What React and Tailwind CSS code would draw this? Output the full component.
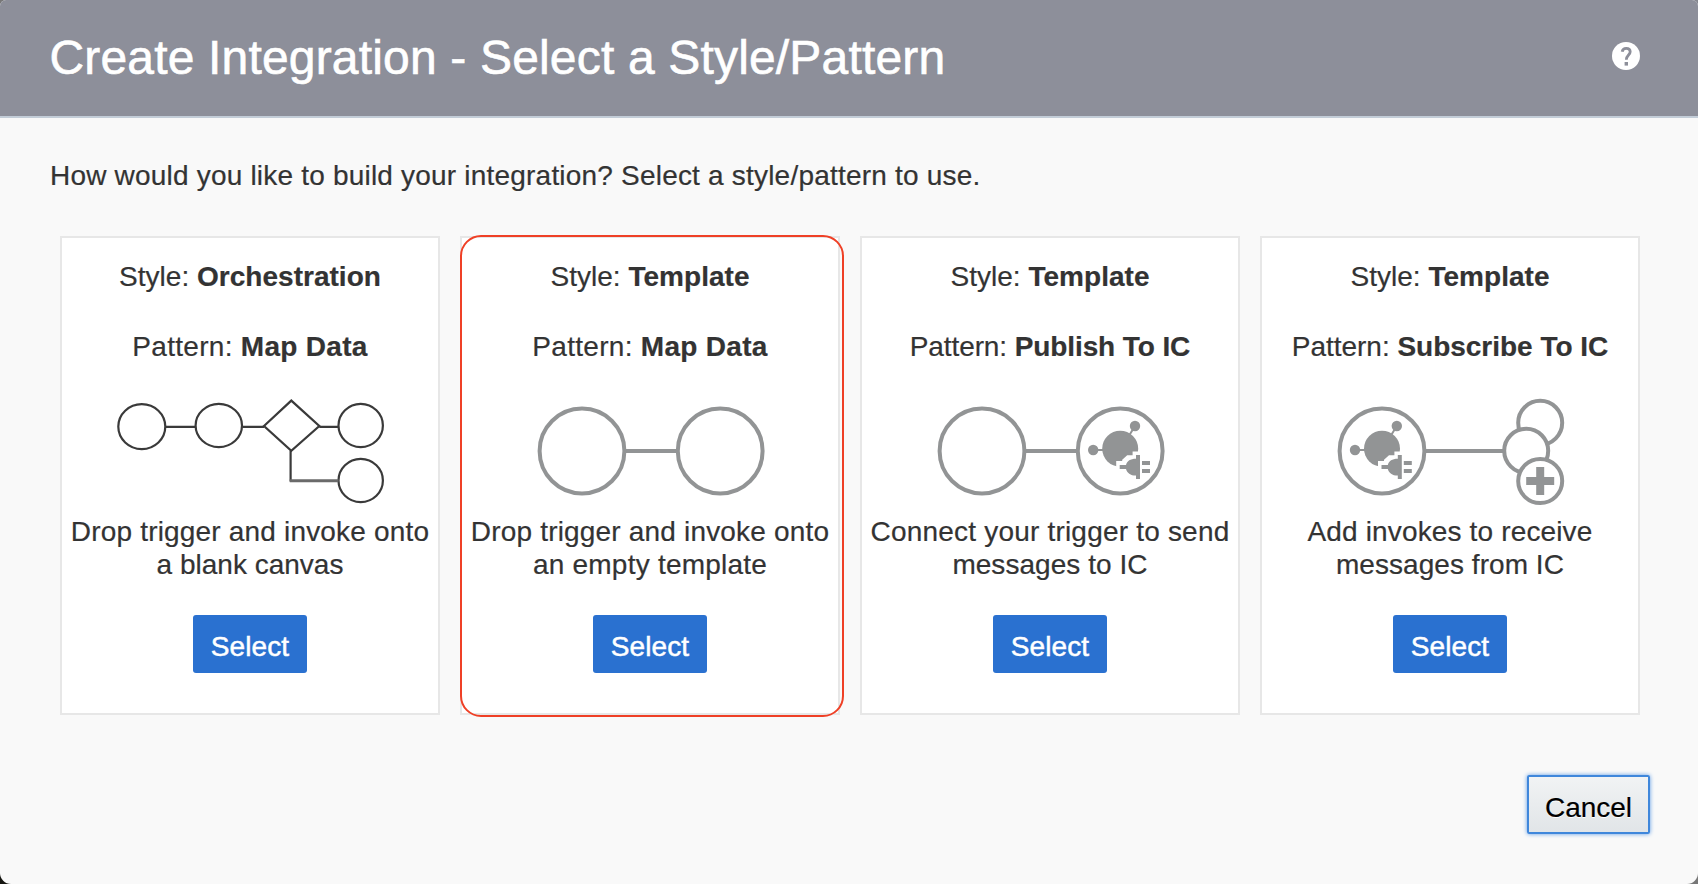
const ICON = '#929495';

function Ring({ cx, cy, r = 42.4 }) {
  return <circle cx={cx} cy={cy} r={r} fill="#fff" stroke={ICON} strokeWidth="4" />;
}

function Plug({ x, y }) {
  return (
    <g transform={`translate(${x} ${y})`} fill={ICON}>
      <path d="M-27 -1H-10M14.8 -25L8 -14" stroke={ICON} strokeWidth="2" />
      <circle cx="-27" cy="-1" r="5.2" />
      <circle cx="14.8" cy="-25" r="5.2" />
      <circle cx="0" cy="-2.3" r="18" />
      <path d="M19 0.4H12.4V4.2H7L2 8.8V10H-4V18H19Z" fill="#fff" />
      <path d="M-0.5 14H5.8C7 10 10 7.8 15.8 7.8V4H19.8V28H15.8V24.6C10 24.6 7 22 5.8 18H-0.5Z" />
      <path d="M21.8 10H29.8V14H21.8ZM21.8 18H29.8V22H21.8Z" />
    </g>
  );
}

function Orchestration() {
  return (
    <g fill="none" stroke="#3a3a3a" strokeWidth="2.2">
      <ellipse cx="79.8" cy="36.6" rx="23.5" ry="22.5" />
      <ellipse cx="156.8" cy="35.5" rx="23.2" ry="21.6" />
      <path d="M202 36L229.3 10.6L257.3 36L229.3 60.7Z" />
      <ellipse cx="298.7" cy="35.5" rx="22.2" ry="21.6" />
      <ellipse cx="298.7" cy="90.5" rx="22.2" ry="21.6" />
      <path d="M103.5 36.8H133.5M180.3 36.8H202M257.3 36.8H276" />
      <path d="M228.6 60.7V91.5" />
      <path d="M227.8 90.8H276.5" stroke="#6a6a6a" strokeWidth="3" />
    </g>
  );
}

function MapData() {
  return (
    <g>
      <path d="M163 61H215" stroke={ICON} strokeWidth="4" />
      <Ring cx={120} cy={61} />
      <Ring cx={258.2} cy={61} />
    </g>
  );
}

function Publish() {
  return (
    <g>
      <MapData />
      <Plug x={258.2} y={61} />
    </g>
  );
}

function Subscribe() {
  return (
    <g>
      <path d="M163 61H242" stroke={ICON} strokeWidth="4" />
      <Ring cx={120} cy={61} />
      <Plug x={120} y={61} />
      <Ring cx={278.2} cy={32.8} r={22} />
      <Ring cx={264.2} cy={60.8} r={22} />
      <Ring cx={278.2} cy={91} r={22} />
      <path d="M264.2 91H292.2M278.2 77V105" stroke={ICON} strokeWidth="8" />
    </g>
  );
}

const cards = [
  {
    style: 'Orchestration',
    pattern: 'Map Data',
    patternTracking: 'tracking-[0.3px]',
    Icon: Orchestration,
    lines: [['Drop trigger and invoke onto', 'tracking-[0.18px]'], ['a blank canvas', '']],
  },
  {
    style: 'Template',
    pattern: 'Map Data',
    patternTracking: 'tracking-[0.3px]',
    Icon: MapData,
    lines: [['Drop trigger and invoke onto', 'tracking-[0.18px]'], ['an empty template', 'tracking-[0.22px]']],
    highlighted: true,
  },
  {
    style: 'Template',
    pattern: 'Publish To IC',
    patternTracking: 'tracking-[-0.1px]',
    Icon: Publish,
    lines: [['Connect your trigger to send', 'tracking-[0.2px]'], ['messages to IC', 'tracking-[0.05px]']],
  },
  {
    style: 'Template',
    pattern: 'Subscribe To IC',
    patternTracking: 'tracking-[-0.02px]',
    Icon: Subscribe,
    lines: [['Add invokes to receive', 'tracking-[0.15px]'], ['messages from IC', 'tracking-[0.05px]']],
  },
];

function Card({ style, pattern, patternTracking, Icon, lines, highlighted }) {
  return (
    <div className="relative flex h-[479px] w-[380px] flex-col items-center border-2 border-[#e7e7e7] bg-white pt-[22px] whitespace-nowrap">
      <p className="tracking-[0.02px]">Style: <b>{style}</b></p>
      <p className={`mt-[37px] ${patternTracking}`}>Pattern: <b>{pattern}</b></p>
      <svg className="mt-[27px] h-[120px] w-[376px] shrink-0" viewBox="0 0 376 120">
        <Icon />
      </svg>
      <div className="mt-[5px] text-center">
        {lines.map(([text, tracking]) => <p key={text} className={tracking}>{text}</p>)}
      </div>
      <button className="mt-[34px] flex h-[58px] w-[114px] justify-center rounded-[3px] bg-[#2a71d0] pt-[15px] tracking-[0.1px] text-white [-webkit-text-stroke:0.5px_#fff]">Select</button>
      {highlighted && (
        <div className="absolute -top-[3px] -left-[2px] h-[482px] w-[384px] rounded-[21px] border-2 border-[#ef4026]" />
      )}
    </div>
  );
}

export default function App() {
  return (
    <div className="h-[884px] w-[1698px] bg-linear-to-tr from-[#151510] via-[#777777] to-[#85878f] font-['Liberation_Sans',Arial,sans-serif]">
      <main className="flex h-full flex-col overflow-hidden rounded-t-[6px] rounded-b-[11px] bg-[#f9f9f9] text-[28px] leading-[33px] text-[#333333] [-webkit-text-stroke:0.2px_currentColor]">
        <header className="flex h-[118px] shrink-0 items-start justify-between border-b-2 border-[#c3cdd8] bg-[#8d8f9a] pr-[58px] pl-[49.5px]">
          <h1 className="mt-[30px] text-[48px] leading-[56px] tracking-[0.17px] text-white [-webkit-text-stroke:0.6px_#fff]">Create Integration - Select a Style/Pattern</h1>
          <svg className="mt-[42px] size-7" viewBox="0 0 28 28" fill="none">
            <circle cx="14" cy="14" r="14" fill="#fff" />
            <path d="M10.2 9.8C10.6 7 12.2 6.4 14.2 6.4C16.4 6.4 18.2 7.6 18.2 9.8C18.2 13 14.3 13.2 14.3 17.8" stroke="#8d8f9a" strokeWidth="2.8" />
            <rect x="12.6" y="20" width="3.4" height="3.6" fill="#8d8f9a" />
          </svg>
        </header>
        <p className="mt-[41px] ml-[50px] tracking-[0.2px] whitespace-nowrap">How would you like to build your integration? Select a style/pattern to use.</p>
        <section className="mt-[44px] ml-[60px] flex gap-5">
          {cards.map((card, i) => <Card key={i} {...card} />)}
        </section>
        <button className="mt-[60px] mr-[48px] flex h-[59px] w-[123px] justify-center self-end rounded-[2px] border-2 border-[#3f87db] bg-linear-to-b from-[#f1f3f4] to-[#e1e5e8] pt-[14px] text-black shadow-[0_0_4px_#5a9ae6] [text-shadow:0_1px_0_#fff]">Cancel</button>
      </main>
    </div>
  );
}
